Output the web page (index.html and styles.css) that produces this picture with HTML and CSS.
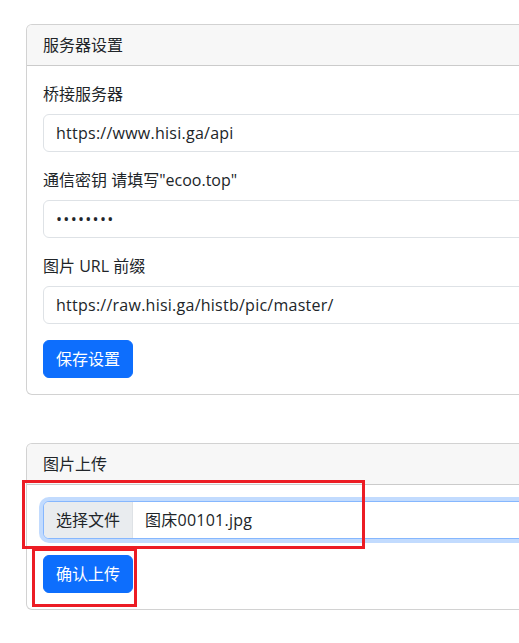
FILE: index.html
```html
<!DOCTYPE html>
<html lang="zh-CN">
<head>
<meta charset="utf-8">
<title>图床设置</title>
<link rel="stylesheet" href="styles.css">
</head>
<body>
<div class="page">
  <div class="card card-first">
    <div class="card-header">服务器设置</div>
    <div class="card-body">
      <div class="field">
        <label class="form-label">桥接服务器</label>
        <input class="form-control" type="text" value="https://www.hisi.ga/api">
      </div>
      <div class="field">
        <label class="form-label">通信密钥 请填写"ecoo.top"</label>
        <input class="form-control form-password" type="password" value="ecoo.top">
      </div>
      <div class="field">
        <label class="form-label">图片 URL 前缀</label>
        <input class="form-control" type="text" value="https://raw.hisi.ga/histb/pic/master/">
      </div>
      <button class="btn">保存设置</button>
    </div>
  </div>

  <div class="card card-second">
    <div class="card-header">图片上传</div>
    <div class="card-body">
      <div class="field">
        <div class="file-control">
          <span class="file-btn">选择文件</span>
          <span class="file-name">图床00101.jpg</span>
        </div>
      </div>
      <button class="btn">确认上传</button>
    </div>
    <div class="mark mark-file"></div>
    <div class="mark mark-btn"></div>
  </div>
</div>
</body>
</html>
```

FILE: styles.css
```css
html, body {
  margin: 0;
  padding: 0;
  background: #fff;
  overflow: hidden;
}
body {
  font-family: "Open Sans", "Noto Sans CJK SC", sans-serif;
  font-size: 16px;
  line-height: 1.5;
  color: #212529;
}
.page {
  padding: 24px 0 0 26px;
  width: 640px;
}
.card {
  position: relative;
  border: 1px solid rgba(0, 0, 0, 0.175);
  border-radius: 6px;
  background: #fff;
}
.card-second {
  margin-top: 48px;
}
.card-header {
  padding: 8px 16px;
  background: #f7f7f7;
  border-bottom: 1px solid rgba(0, 0, 0, 0.175);
  border-radius: 5px 5px 0 0;
}
.card-body {
  padding: 16px;
}
.field {
  margin-bottom: 16px;
}
.form-label {
  display: block;
  margin-bottom: 8px;
}
.form-control {
  display: block;
  box-sizing: border-box;
  width: 100%;
  height: 38px;
  padding: 6px 12px;
  font: inherit;
  letter-spacing: 0.25px;
  color: #212529;
  background: #fff;
  border: 1px solid #dee2e6;
  border-radius: 6px;
  outline: none;
}
.form-password {
  letter-spacing: 1.3px;
}
.btn {
  display: inline-block;
  padding: 6px 12px;
  font: inherit;
  color: #fff;
  background: #0d6efd;
  border: 1px solid #0d6efd;
  border-radius: 6px;
  cursor: pointer;
}
.file-control {
  display: flex;
  box-sizing: border-box;
  height: 38px;
  border: 1px solid #86b7fe;
  border-radius: 6px;
  box-shadow: 0 0 0 4px rgba(13, 110, 253, 0.25);
  overflow: hidden;
  background: #fff;
}
.file-btn {
  padding: 6px 12px;
  background: #e9ecef;
  border-right: 1px solid #dee2e6;
}
.file-name {
  padding: 6px 12px;
  letter-spacing: 0.25px;
}
.mark {
  position: absolute;
  border: 3px solid #ec1c24;
  box-sizing: border-box;
}
.mark-file {
  left: -5px;
  top: 36px;
  width: 343px;
  height: 69px;
}
.mark-btn {
  left: 5px;
  top: 104px;
  width: 105px;
  height: 59px;
}
```
